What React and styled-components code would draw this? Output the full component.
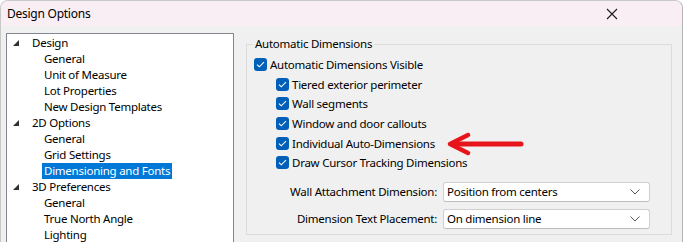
import React from "react";
import styled, { createGlobalStyle } from "styled-components";

const Global = createGlobalStyle`
  html, body { margin: 0; padding: 0; background: #ffffff; overflow: hidden; }
  body { font-family: "Noto Sans", "Open Sans", sans-serif; font-size: 11.5px; letter-spacing: -0.25px; color: #000; }
  * { box-sizing: border-box; }
`;

const Window = styled.div`
  position: relative;
  width: 683px;
  height: 242px;
  background: #f0f0f0;
  border-left: 1px solid #c8c8c8;
  border-right: 1px solid #b4b4b4;
  border-top: 1px solid #c8c8c8;
  border-top-right-radius: 8px;
  border-top-left-radius: 8px;
  overflow: hidden;
  display: flex;
  flex-direction: column;
`;

const TitleBar = styled.div`
  height: 25px;
  flex: none;
  background: #f9eef4;
  display: flex;
  align-items: center;
  justify-content: space-between;
  padding-left: 6px;
  padding-right: 64px;
  font-size: 12px;
  letter-spacing: -0.25px;
`;

const Body = styled.div`
  flex: 1;
  display: flex;
  align-items: flex-start;
  padding: 7px 0 0 5px;
`;

const Tree = styled.div`
  width: 228px;
  height: 230px;
  flex: none;
  background: #fff;
  border: 1px solid #828790;
  padding-top: 1px;
`;

const Row = styled.div`
  height: 16px;
  display: flex;
  align-items: center;
  padding-left: ${(p) => (p.$child ? 35 : 5)}px;
  line-height: 16px;
  white-space: nowrap;
`;

const Expander = styled.span`
  width: 13px;
  height: 16px;
  flex: none;
  display: flex;
  align-items: center;
  padding-left: 1px;
  margin-right: 5px;
`;

const Label = styled.span`
  padding: 0 2px;
  height: 16px;
  background: ${(p) => (p.$selected ? "#0078d7" : "transparent")};
  color: ${(p) => (p.$selected ? "#fff" : "#000")};
`;

const Right = styled.div`
  flex: none;
  width: 426px;
  margin-left: 12px;
  padding-top: 3px;
`;

const Group = styled.fieldset`
  margin: 0;
  height: 199px;
  border: 1px solid #dcdcdc;
  padding: 3px 0 0 7px;
`;

const Legend = styled.legend`
  padding: 0 2px;
  margin-left: -1px;
  line-height: 16px;
`;

const CheckRow = styled.div`
  height: 19.6px;
  display: flex;
  align-items: center;
  gap: 3px;
  margin-left: ${(p) => (p.$sub ? 22 : 0)}px;
  white-space: nowrap;
`;

const Box = styled.span`
  width: 13px;
  height: 13px;
  flex: none;
  border-radius: 3px;
  background: #005fb8;
  display: flex;
  align-items: center;
  justify-content: center;
`;

const Form = styled.div`
  margin-top: 9px;
  display: grid;
  grid-template-columns: 183px 207px;
  column-gap: 6px;
  row-gap: 7px;
  align-items: center;
`;

const FormLabel = styled.span`
  justify-self: end;
  white-space: nowrap;
`;

const Select = styled.div`
  height: 20px;
  background: #fff;
  border: 1px solid #d0d0d0;
  border-bottom-color: #bdbdbd;
  border-radius: 3px;
  display: flex;
  align-items: center;
  justify-content: space-between;
  padding: 0 9px 0 3px;
`;

const Arrow = styled.svg`
  position: absolute;
  left: 444px;
  top: 130px;
`;

const Check = () => (
  <svg width="9" height="7" viewBox="0 0 9 7">
    <path d="M1 3.6 L3.3 5.8 L8 1.2" fill="none" stroke="#fff" strokeWidth="1.1" />
  </svg>
);

const Triangle = () => (
  <svg width="6" height="6" viewBox="0 0 6 6">
    <polygon points="6,0 6,6 0,6" fill="#303030" />
  </svg>
);

const Chevron = () => (
  <svg width="10" height="6" viewBox="0 0 10 6">
    <path d="M0.5 0.5 L5 5 L9.5 0.5" fill="none" stroke="#555" strokeWidth="1" />
  </svg>
);

const tree = [
  { t: "Design", p: true },
  { t: "General" },
  { t: "Unit of Measure" },
  { t: "Lot Properties" },
  { t: "New Design Templates" },
  { t: "2D Options", p: true },
  { t: "General" },
  { t: "Grid Settings" },
  { t: "Dimensioning and Fonts", s: true },
  { t: "3D Preferences", p: true },
  { t: "General" },
  { t: "True North Angle" },
  { t: "Lighting" },
];

const subs = [
  "Tiered exterior perimeter",
  "Wall segments",
  "Window and door callouts",
  "Individual Auto-Dimensions",
  "Draw Cursor Tracking Dimensions",
];

export default function App() {
  return (
    <>
      <Global />
      <Window>
        <TitleBar>
          <span>Design Options</span>
          <svg width="12" height="12" viewBox="0 0 12 12">
            <path d="M1 1 L11 11 M11 1 L1 11" stroke="#1a1a1a" strokeWidth="1.1" />
          </svg>
        </TitleBar>
        <Body>
          <Tree>
            {tree.map((r, i) =>
              r.p ? (
                <Row key={i}>
                  <Expander>
                    <Triangle />
                  </Expander>
                  <Label>{r.t}</Label>
                </Row>
              ) : (
                <Row key={i} $child>
                  <Label $selected={r.s}>{r.t}</Label>
                </Row>
              )
            )}
          </Tree>
          <Right>
            <Group>
              <Legend>Automatic Dimensions</Legend>
              <CheckRow>
                <Box>
                  <Check />
                </Box>
                Automatic Dimensions Visible
              </CheckRow>
              {subs.map((s) => (
                <CheckRow key={s} $sub>
                  <Box>
                    <Check />
                  </Box>
                  {s}
                </CheckRow>
              ))}
              <Form>
                <FormLabel>Wall Attachment Dimension:</FormLabel>
                <Select>
                  <span>Position from centers</span>
                  <Chevron />
                </Select>
                <FormLabel>Dimension Text Placement:</FormLabel>
                <Select>
                  <span>On dimension line</span>
                  <Chevron />
                </Select>
              </Form>
            </Group>
          </Right>
        </Body>
        <Arrow width="82" height="26" viewBox="0 0 82 26">
          <path d="M76 13 L10 13" stroke="#e8141c" strokeWidth="5" strokeLinecap="round" />
          <path d="M23 4 L5 13 L23 22" fill="none" stroke="#e8141c" strokeWidth="4.5" strokeLinecap="round" strokeLinejoin="round" />
        </Arrow>
      </Window>
    </>
  );
}
